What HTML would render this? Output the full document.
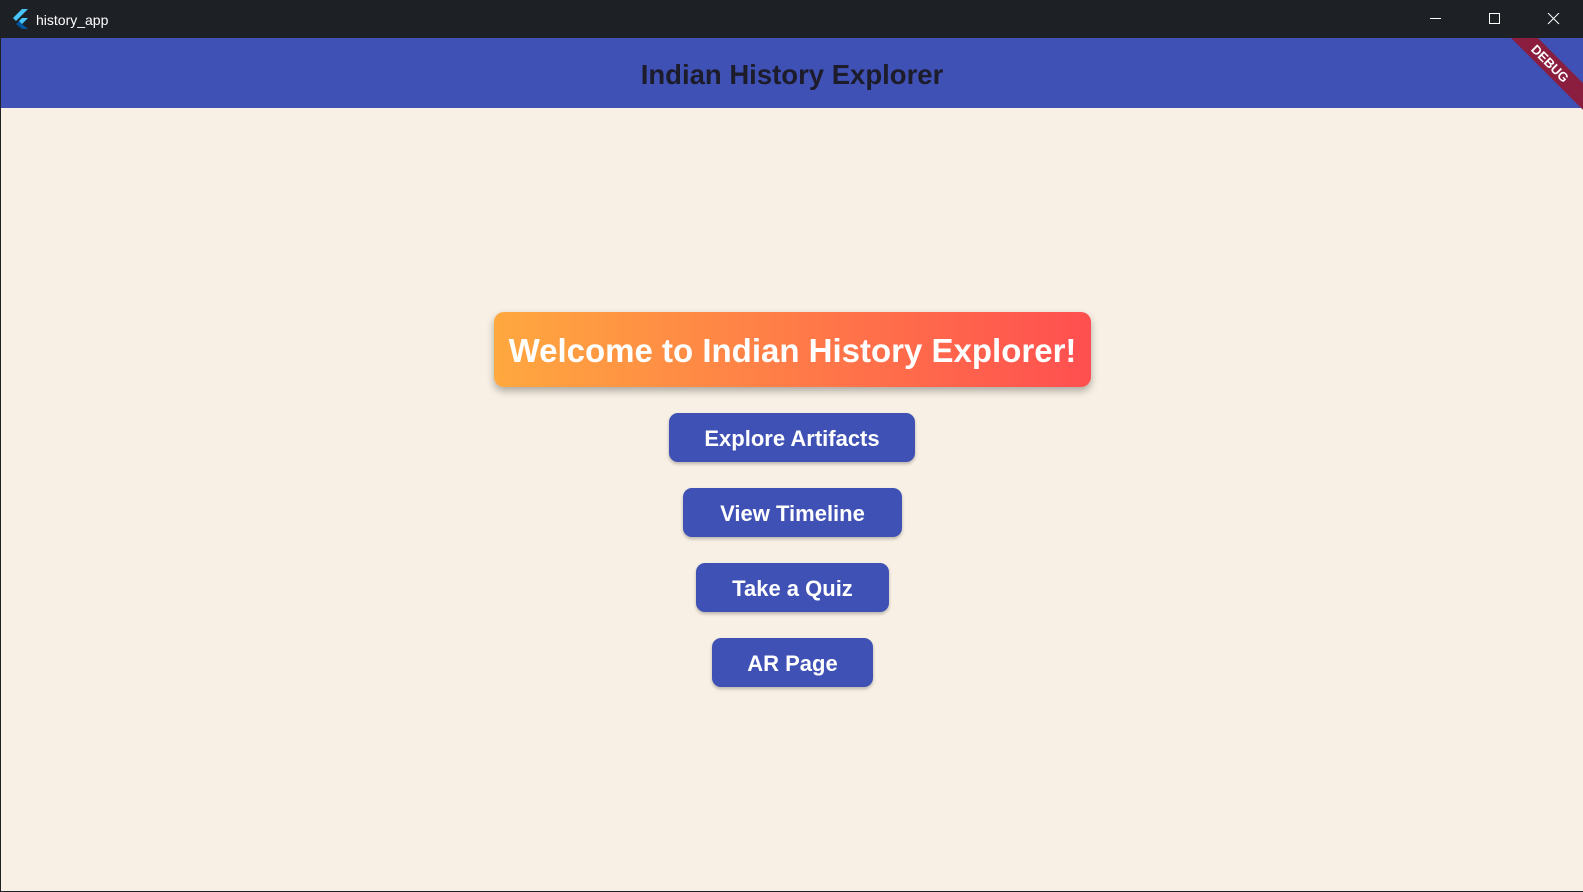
<!DOCTYPE html>
<html><head><meta charset="utf-8"><style>
*{margin:0;padding:0;box-sizing:border-box}
body{width:1583px;height:892px;overflow:hidden;background:#1e2024;font-family:"Liberation Sans",sans-serif;position:relative}
.title{position:absolute;left:0;top:0;width:1583px;height:38px;background:#1d2025;color:#fff;font-size:14px}
.title span{position:absolute;left:36px;top:12px}
.app{position:absolute;left:1px;top:38px;width:1582px;height:853px;background:#f8f0e4;overflow:hidden}
.bar{position:absolute;left:0;top:0;width:100%;height:70px;background:#3f51b5;color:#1c1c2a;font-weight:bold;font-size:27.5px;text-align:center;line-height:73px}
.welcome{position:absolute;left:493px;top:274px;width:597px;height:75px;border-radius:10px;background:linear-gradient(90deg,#ffa83f,#ff4f50);box-shadow:0 4px 8px rgba(0,0,0,.3);color:#fff;font-weight:bold;font-size:33px;text-align:center;line-height:78px}
.btn{position:absolute;height:49px;border-radius:9px;background:#3f51b5;color:#fff;font-size:22px;font-weight:bold;text-align:center;line-height:51px;box-shadow:0 2px 3px rgba(0,0,0,.25)}
.debug{position:absolute;right:-32px;top:16px;width:130px;height:19px;background:#8b1e3f;color:#fff;font-size:13px;font-weight:bold;text-align:center;line-height:19px;transform:rotate(45deg)}
</style></head><body>
<div class="title">
<svg style="position:absolute;left:11px;top:9px" width="18" height="20" viewBox="0 0 18 20"><path d="M11 0h6L5 12 2 9z" fill="#47c5fb"/><path d="M11 9h6l-6 6 6 5h-6l-6-5z" fill="#00569e"/><path d="M8 12l3-3h6l-6 6z" fill="#47c5fb"/></svg>
<span>history_app</span>
<svg style="position:absolute;left:1430px;top:13px" width="130" height="12" viewBox="0 0 130 12"><path d="M0 5.5h11" stroke="#fff"/><path d="M59.5 0.5h10v10h-10z" stroke="#fff" fill="none"/><path d="M118 0l11 11M129 0l-11 11" stroke="#fff"/></svg>
</div>
<div class="app">
<div class="bar">Indian History Explorer</div>
<div class="debug">DEBUG</div>
<div class="welcome">Welcome to Indian History Explorer!</div>
<div class="btn" style="left:668px;top:375px;width:246px">Explore Artifacts</div>
<div class="btn" style="left:682px;top:450px;width:219px">View Timeline</div>
<div class="btn" style="left:695px;top:525px;width:193px">Take a Quiz</div>
<div class="btn" style="left:711px;top:600px;width:161px">AR Page</div>
</div>
</body></html>
